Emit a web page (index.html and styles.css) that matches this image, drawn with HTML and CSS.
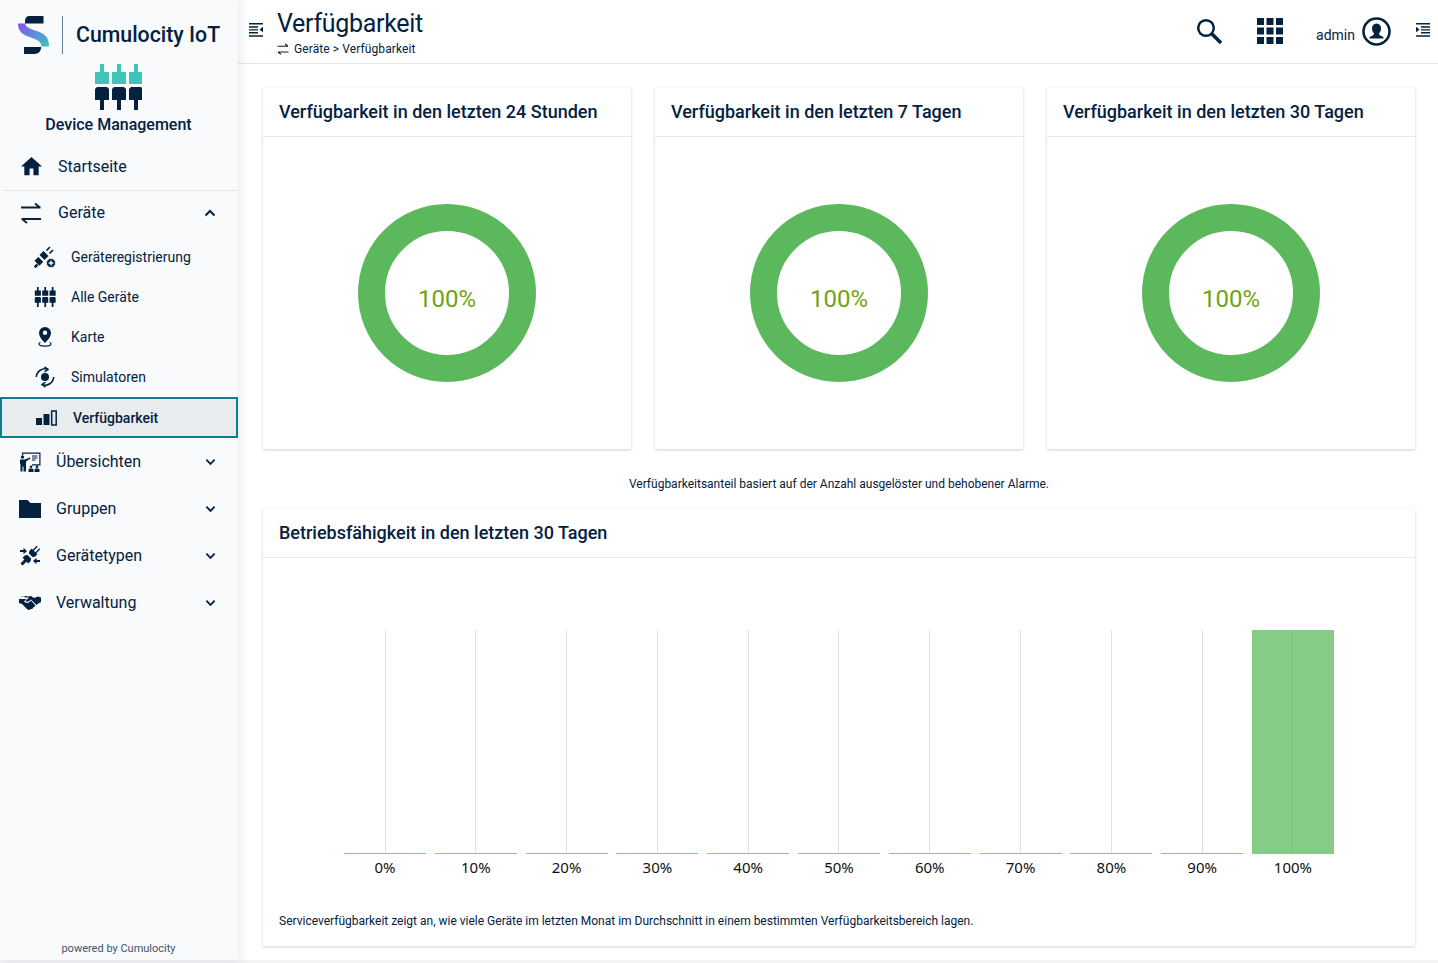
FILE: index.html
```html
<!DOCTYPE html>
<html lang="de">
<head>
    <meta charset="UTF-8">
    <title>Verfügbarkeit</title>
    <link rel="stylesheet" href="styles.css">
</head>
<body>
<div class="app">
    <aside class="sidebar">
        <div class="brand">
            <svg class="brand-logo" viewBox="0 0 32 38" width="32" height="38">
                <defs>
                    <linearGradient id="swoosh" x1="0" y1="0" x2="1" y2="1">
                        <stop offset="0" stop-color="#8a4fe8"/>
                        <stop offset="0.5" stop-color="#5a8fd8"/>
                        <stop offset="1" stop-color="#3ec4b8"/>
                    </linearGradient>
                </defs>
                <path d="M25.5 0H12C8.5 0 7 2 7 5.5L7 7.5H25.500Z" fill="#04213f"/>
                <path d="M0 7.500H7C8 11 11 12.500 17 14.500C26 17.500 31 20 31 30.500H23.500C23 25.500 20 24 14 22C5 19 0 16 0 7.500Z" fill="url(#swoosh)"/>
                <path d="M6 31H23.200C23 35 21 38 16 38H6Z" fill="#04213f"/>
            </svg>
            <span class="brand-sep"></span>
            <span class="brand-name">Cumulocity IoT</span>
        </div>
        <div class="app-mark">
            <svg viewBox="0 0 47 46" width="47" height="46">
                <g id="plug">
                    <path d="M5 0H9V8H14V20H0V8H5Z" fill="#3fc4b8"/>
                    <path d="M2 23H12L14 25V36H9V46H5V36H0V25Z" fill="#04213f"/>
                </g>
                <use href="#plug" x="17"/>
                <use href="#plug" x="34"/>
            </svg>
            <div class="app-name">Device Management</div>
        </div>
        <nav class="nav">
            <a class="nav-top">
                <svg viewBox="0 0 24 24" width="23" height="23"><path d="M10 21v-7h4v7h5.500v-9H23L12 2 1 12h3.500v9z" fill="#04213f"/></svg>
                <span>Startseite</span>
            </a>
            <a class="nav-group nav-open">
                <svg viewBox="0 0 24 24" width="24" height="24" fill="none" stroke="#04213f" stroke-width="1.800"><path d="M2 6.500H21.500M16 2.500l5 4"/><path d="M22 18H2.500M8 22l-5-4"/></svg>
                <span>Geräte</span>
                <svg class="chev" viewBox="0 0 12 8" width="12" height="8"><path d="M1.500 6.500L6 2l4.500 4.500" fill="none" stroke="#04213f" stroke-width="2"/></svg>
            </a>
            <div class="sub">
                <a class="sub-item">
                    <svg viewBox="0 0 22 22" width="22" height="22" fill="none" stroke="#04213f">
                        <path d="M8 11.500L12 7.500" stroke-width="7"/>
                        <path d="M3 17.200L6.800 13.400" stroke-width="7"/>
                        <path d="M12.500 4.500L16 1M15.500 7.500L19 4" stroke-width="1.700"/>
                        <path d="M.7 21.300L3.500 18.500" stroke-width="2.600"/>
                        <circle cx="17" cy="17" r="4.600" fill="#04213f" stroke="#f8fafc" stroke-width=".8"/>
                        <path d="M17 14.600v4.800M14.600 17h4.800" stroke="#f8fafc" stroke-width="1.300"/>
                    </svg>
                    <span>Geräteregistrierung</span>
                </a>
                <a class="sub-item">
                    <svg viewBox="0 0 47 46" width="21" height="20" fill="#04213f"><g id="mini"><path d="M5 0H9V8H14V20H0V8H5Z"/><path d="M2 23H12L14 25V36H9V46H5V36H0V25Z"/></g><use href="#mini" x="17"/><use href="#mini" x="34"/></svg>
                    <span>Alle Geräte</span>
                </a>
                <a class="sub-item">
                    <svg viewBox="0 0 22 22" width="22" height="22"><path d="M11 1a6 6 0 0 0-6 6c0 4.500 6 10 6 10s6-5.500 6-10a6 6 0 0 0-6-6zm0 8a2.200 2.200 0 1 1 0-4.400A2.200 2.200 0 0 1 11 9z" fill="#04213f"/><path d="M6.500 16.500C5 17 4.500 18 5.500 19c2 1.600 9 1.600 11 0 1-1 .5-2-1-2.500" fill="none" stroke="#04213f" stroke-width="1.200"/></svg>
                    <span>Karte</span>
                </a>
                <a class="sub-item">
                    <svg viewBox="0 0 22 22" width="22" height="22" fill="none" stroke="#04213f" stroke-width="1.600"><circle cx="11" cy="11" r="4" fill="#04213f" stroke="none"/><path d="M2.300 11A8.700 8.700 0 0 1 14 3.400"/><path d="M19.700 11A8.700 8.700 0 0 1 8 18.600"/><path d="M10.500 .8l3.500 2.600-3.500 2.600M11.500 16l-3.500 2.600 3.500 2.600" stroke-width="1.500"/></svg>
                    <span>Simulatoren</span>
                </a>
                <a class="sub-item sub-active">
                    <svg viewBox="0 0 22 16" width="22" height="16"><rect x="1" y="8" width="6" height="7" fill="#04213f"/><rect x="8.500" y="4" width="6" height="11" fill="#04213f"/><rect x="16.700" y="1" width="4.500" height="14" fill="none" stroke="#04213f" stroke-width="1.500"/></svg>
                    <span>Verfügbarkeit</span>
                </a>
            </div>
            <a class="nav-group">
                <svg viewBox="0 0 22 20" width="22" height="20"><path d="M3 .5h18.500v13H13v-1.200h7.300V1.700H4.200V3H3z" fill="#04213f"/><circle cx="3.500" cy="5" r="1.700" fill="#04213f"/><path d="M1 7.500h5l5-2 .5 1-4.500 3v10H4.500v-5h-1v5H1.500v-7L1 12z" fill="#04213f"/><path d="M13 4h5.500M13 6h5.500M13 8h3.500" stroke="#04213f"/><circle cx="12" cy="14.700" r="1.300" fill="#04213f"/><circle cx="18" cy="14.700" r="1.300" fill="#04213f"/><path d="M9.500 20v-2.500l1-1h3l1 1V20zM15.500 20v-2.500l1-1h3l1 1V20z" fill="#04213f"/></svg>
                <span>Übersichten</span>
                <svg class="chev" viewBox="0 0 12 8" width="11" height="8"><path d="M1.500 1.500L6 6l4.500-4.500" fill="none" stroke="#04213f" stroke-width="2"/></svg>
            </a>
            <a class="nav-group">
                <svg viewBox="0 0 22 18" width="22" height="18"><path d="M0 0h8.500l3 3H22v15H0z" fill="#04213f"/></svg>
                <span>Gruppen</span>
                <svg class="chev" viewBox="0 0 12 8" width="11" height="8"><path d="M1.500 1.500L6 6l4.500-4.500" fill="none" stroke="#04213f" stroke-width="2"/></svg>
            </a>
            <a class="nav-group">
                <svg viewBox="0 0 22 22" width="22" height="22">
                    <g transform="rotate(45 11 11)" fill="#04213f">
                        <path d="M7 4.500h1.500V-1h1.400v5.500h2.200V-1h1.400v5.500H15V8l-1.500 2h-5L7 8z"/>
                        <path d="M8.500 12h5L15 14v3.500h-2.500V23h-3v-5.500H7V14z"/>
                    </g>
                    <path d="M1 5h3.500V2.800L8 6 4.500 9.200V7H1zM21 15h-3.500v-2.200L14 16l3.500 3.200V17H21z" fill="#04213f"/>
                </svg>
                <span>Gerätetypen</span>
                <svg class="chev" viewBox="0 0 12 8" width="11" height="8"><path d="M1.500 1.500L6 6l4.500-4.500" fill="none" stroke="#04213f" stroke-width="2"/></svg>
            </a>
            <a class="nav-group">
                <svg viewBox="0 0 22 14" width="22" height="14"><path d="M0 1.500L3 .5l4 1h3L6.500 5c1 1 2.500 1 3.500 0l2-1.500 5.500 5.500 1-1L22 6V1.500L19 .5 15 2l-3-2-3 .5L7 0z" fill="#04213f"/><path d="M0 3v4l3 1 5 5c1.500 1.500 3 1 3.500 0 1 .5 2.500-.2 2.500-1.500 1 0 2.500-1 2-2.500L12 4.500 10.500 6C9 7.500 6.500 7 5 5.500L7.500 3H3z" fill="#04213f"/></svg>
                <span>Verwaltung</span>
                <svg class="chev" viewBox="0 0 12 8" width="11" height="8"><path d="M1.500 1.500L6 6l4.500-4.500" fill="none" stroke="#04213f" stroke-width="2"/></svg>
            </a>
        </nav>
        <div class="powered">powered by Cumulocity</div>
    </aside>

    <div class="main">
        <header class="topbar">
            <svg class="toggle" viewBox="0 0 15 13" width="15" height="14" preserveAspectRatio="none" fill="#04213f"><path d="M0 0h14v1.500H0zM0 3h9v1.300H0zM0 5.700h9V7H0zM0 8.400h9v1.300H0zM0 11.300h14v1.500H0zM14 3.500v5L10.500 6z"/></svg>
            <div class="page-head">
                <h1>Verfügbarkeit</h1>
                <div class="crumbs">
                    <svg viewBox="0 0 24 24" width="12" height="12" fill="none" stroke="#04213f" stroke-width="2.200"><path d="M1 6.500H22M16 2l6 4.500"/><path d="M23 18H2M8 22.500l-6-4.500"/></svg>
                    <span>Geräte &gt; Verfügbarkeit</span>
                </div>
            </div>
            <div class="top-actions">
                <svg class="search" viewBox="0 0 26 26" width="26" height="26" fill="none" stroke="#04213f"><circle cx="10" cy="10" r="7.800" stroke-width="2.500"/><path d="M15.500 15.500L25 25" stroke-width="3.500"/></svg>
                <svg class="apps" viewBox="0 0 26 26" width="26" height="26" fill="#04213f">
                    <rect width="7" height="7"/><rect x="9.500" width="7" height="7"/><rect x="19" width="7" height="7"/>
                    <rect y="9.500" width="7" height="7"/><rect x="9.500" y="9.500" width="7" height="7"/><rect x="19" y="9.500" width="7" height="7"/>
                    <rect y="19" width="7" height="7"/><rect x="9.500" y="19" width="7" height="7"/><rect x="19" y="19" width="7" height="7"/>
                </svg>
                <span class="user">admin</span>
                <svg class="avatar" viewBox="0 0 29 29" width="29" height="29"><circle cx="14.500" cy="14.500" r="13" fill="none" stroke="#04213f" stroke-width="2.600"/><path d="M14.500 6.500c3 0 4.500 2.200 4.500 5 0 2-1 4-2 5 0 1.500 1.500 2 3 2.700l1.500 1v1.300h-14v-1.300l1.500-1c1.500-.7 3-1.200 3-2.700-1-1-2-3-2-5 0-2.800 1.500-5 4.500-5z" fill="#04213f"/></svg>
                <svg class="toggle-right" viewBox="0 0 15 13" width="15" height="14" preserveAspectRatio="none" fill="#04213f"><path d="M1 0h14v1.500H1zM6 3h9v1.300H6zM6 5.700h9V7H6zM6 8.400h9v1.300H6zM1 11.300h14v1.500H1zM1 3.500v5L4.500 6z"/></svg>
            </div>
        </header>

        <div class="content">
            <div class="cards">
                <section class="card">
                    <h2>Verfügbarkeit in den letzten 24 Stunden</h2>
                    <div class="donut-body">
                        <div class="donut"><svg viewBox="0 0 178 178" width="178" height="178"><circle cx="89" cy="89" r="75.500" fill="none" stroke="#5cb85c" stroke-width="27"/></svg><span>100%</span></div>
                    </div>
                </section>
                <section class="card">
                    <h2>Verfügbarkeit in den letzten 7 Tagen</h2>
                    <div class="donut-body">
                        <div class="donut"><svg viewBox="0 0 178 178" width="178" height="178"><circle cx="89" cy="89" r="75.500" fill="none" stroke="#5cb85c" stroke-width="27"/></svg><span>100%</span></div>
                    </div>
                </section>
                <section class="card">
                    <h2>Verfügbarkeit in den letzten 30 Tagen</h2>
                    <div class="donut-body">
                        <div class="donut"><svg viewBox="0 0 178 178" width="178" height="178"><circle cx="89" cy="89" r="75.500" fill="none" stroke="#5cb85c" stroke-width="27"/></svg><span>100%</span></div>
                    </div>
                </section>
            </div>
            <p class="note">Verfügbarkeitsanteil basiert auf der Anzahl ausgelöster und behobener Alarme.</p>
            <section class="card card-chart">
                <h2>Betriebsfähigkeit in den letzten 30 Tagen</h2>
                <div class="chart">
                    <div class="col"><div class="plot"></div><span>0%</span></div>
                    <div class="col"><div class="plot"></div><span>10%</span></div>
                    <div class="col"><div class="plot"></div><span>20%</span></div>
                    <div class="col"><div class="plot"></div><span>30%</span></div>
                    <div class="col"><div class="plot"></div><span>40%</span></div>
                    <div class="col"><div class="plot"></div><span>50%</span></div>
                    <div class="col"><div class="plot"></div><span>60%</span></div>
                    <div class="col"><div class="plot"></div><span>70%</span></div>
                    <div class="col"><div class="plot"></div><span>80%</span></div>
                    <div class="col"><div class="plot"></div><span>90%</span></div>
                    <div class="col"><div class="plot plot-full"></div><span>100%</span></div>
                </div>
                <p class="chart-note">Serviceverfügbarkeit zeigt an, wie viele Geräte im letzten Monat im Durchschnitt in einem bestimmten Verfügbarkeitsbereich lagen.</p>
            </section>
        </div>
    </div>
</div>
</body>
</html>
```

FILE: styles.css
```css
html, body {
    margin: 0;
    height: 100%;
    overflow: hidden;
}
body {
    background-color: #f2f3f5;
    font-family: Roboto, "Liberation Sans", sans-serif;
    color: #04213f;
}
.app {
    display: flex;
    height: 960px;
    background-color: #fff;
}

/* sidebar */
.sidebar {
    width: 238px;
    flex: none;
    display: flex;
    flex-direction: column;
    background-color: #f8fafc;
    box-shadow: 2px 0 10px rgba(4, 33, 63, 0.1);
    z-index: 1;
}
.brand {
    display: flex;
    align-items: center;
    height: 38px;
    padding: 16px 0 10px 18px;
}
.brand-sep {
    width: 1px;
    height: 38px;
    margin: 0 13px 0 12px;
    background-color: #5f7f9c;
}
.brand-name {
    margin-top: -1px;
    font-size: 21.3px;
    font-weight: 500;
}
.app-mark {
    display: flex;
    flex-direction: column;
    align-items: center;
    height: 79px;
    padding-right: 1px;
}
.app-name {
    margin-top: 5px;
    font-size: 16px;
    font-weight: 500;
}
.nav {
    display: flex;
    flex-direction: column;
}
.nav-top,
.nav-group {
    display: flex;
    align-items: center;
    flex: none;
    height: 47px;
    font-size: 16px;
}
.nav-top {
    margin-left: 3px;
    padding-left: 17px;
    border-bottom: 1px solid #e3e6ea;
}
.nav-top span {
    margin-left: 15px;
}
.nav-group {
    padding-left: 19px;
    padding-right: 22px;
}
.nav-group span {
    flex: 1;
    margin-left: 15px;
}
.nav-open {
    height: 43px;
}
.chev {
    flex: none;
}
.sub {
    display: flex;
    flex-direction: column;
    padding-top: 3px;
}
.sub-item {
    display: flex;
    align-items: center;
    height: 40px;
    padding-left: 34px;
    font-size: 14px;
}
.sub-item svg {
    flex: none;
    width: 22px;
}
.sub-item span {
    margin-left: 15px;
}
.sub-active {
    box-sizing: border-box;
    height: 41px;
    padding-left: 33px;
    border: 2px solid #0b7f8f;
    background-color: #e8ecef;
    font-weight: 500;
}
.sub-active span {
    margin-left: 16px;
}
.powered {
    margin-top: auto;
    padding: 0 1px 5px 0;
    text-align: center;
    font-size: 11px;
    color: #3d5570;
}

/* header */
.main {
    flex: 1;
    min-width: 0;
    display: flex;
    flex-direction: column;
}
.topbar {
    display: flex;
    align-items: center;
    flex: none;
    height: 63px;
    padding-left: 11px;
    border-bottom: 1px solid #e3e6ea;
}
.toggle {
    flex: none;
    margin-top: -4px;
}
.page-head {
    margin-left: 13px;
    margin-top: 1px;
}
.page-head h1 {
    margin: 0;
    font-size: 25px;
    font-weight: 400;
    line-height: 30px;
    letter-spacing: -0.3px;
}
.crumbs {
    display: flex;
    align-items: center;
    gap: 5px;
    margin-top: 3px;
    font-size: 12px;
    line-height: 14px;
    letter-spacing: 0.1px;
}
.top-actions {
    display: flex;
    align-items: center;
    margin: -1px 0 0 auto;
    padding-right: 8px;
}
.apps {
    margin-left: 35px;
}
.user {
    margin-left: 33px;
    padding-top: 7px;
    font-size: 14px;
}
.avatar {
    margin-left: 7px;
}
.toggle-right {
    margin-left: 24px;
    margin-top: -3px;
}

/* content */
.content {
    flex: 1;
    padding: 24px 23px 0 25px;
}
.cards {
    display: grid;
    grid-template-columns: repeat(3, 368px);
    column-gap: 24px;
}
.card {
    background-color: #fff;
    box-shadow: 0 1px 3px rgba(4, 33, 63, 0.2);
}
.card h2 {
    margin: 0;
    height: 48px;
    padding-left: 16px;
    line-height: 48px;
    font-size: 18px;
    font-weight: 500;
    border-bottom: 1px solid #e3e6ea;
}
.donut-body {
    display: flex;
    align-items: center;
    justify-content: center;
    height: 312px;
}
.donut {
    display: grid;
    place-items: center;
}
.donut svg,
.donut span {
    grid-area: 1 / 1;
}
.donut svg {
    display: block;
}
.donut span {
    padding-top: 12px;
    font-size: 24px;
    color: #6ea40f;
}
.note {
    margin: 28px 0 18px;
    text-align: center;
    font-size: 12px;
    line-height: 14px;
}
.chart {
    display: grid;
    grid-template-columns: repeat(11, 82px);
    column-gap: 8.8px;
    padding: 72px 0 0 81px;
}
.col {
    display: flex;
    flex-direction: column;
    align-items: center;
}
.plot {
    width: 100%;
    height: 224px;
    box-sizing: border-box;
    border-bottom: 1px solid #86cb85;
    background: linear-gradient(#e2e2e2, #e2e2e2) center / 1px 100% no-repeat;
}
.plot-full {
    border-bottom: 0;
    background: linear-gradient(#7fc57e, #7fc57e) center / 1px 100% no-repeat, #87cc86;
}
.col span {
    margin-top: 5px;
    font-family: "Noto Sans", sans-serif;
    font-size: 15px;
    line-height: 17px;
    color: #111;
}
.chart-note {
    margin: 38px 0 0;
    padding: 0 0 18px 16px;
    font-size: 12px;
    line-height: 14px;
}
```
